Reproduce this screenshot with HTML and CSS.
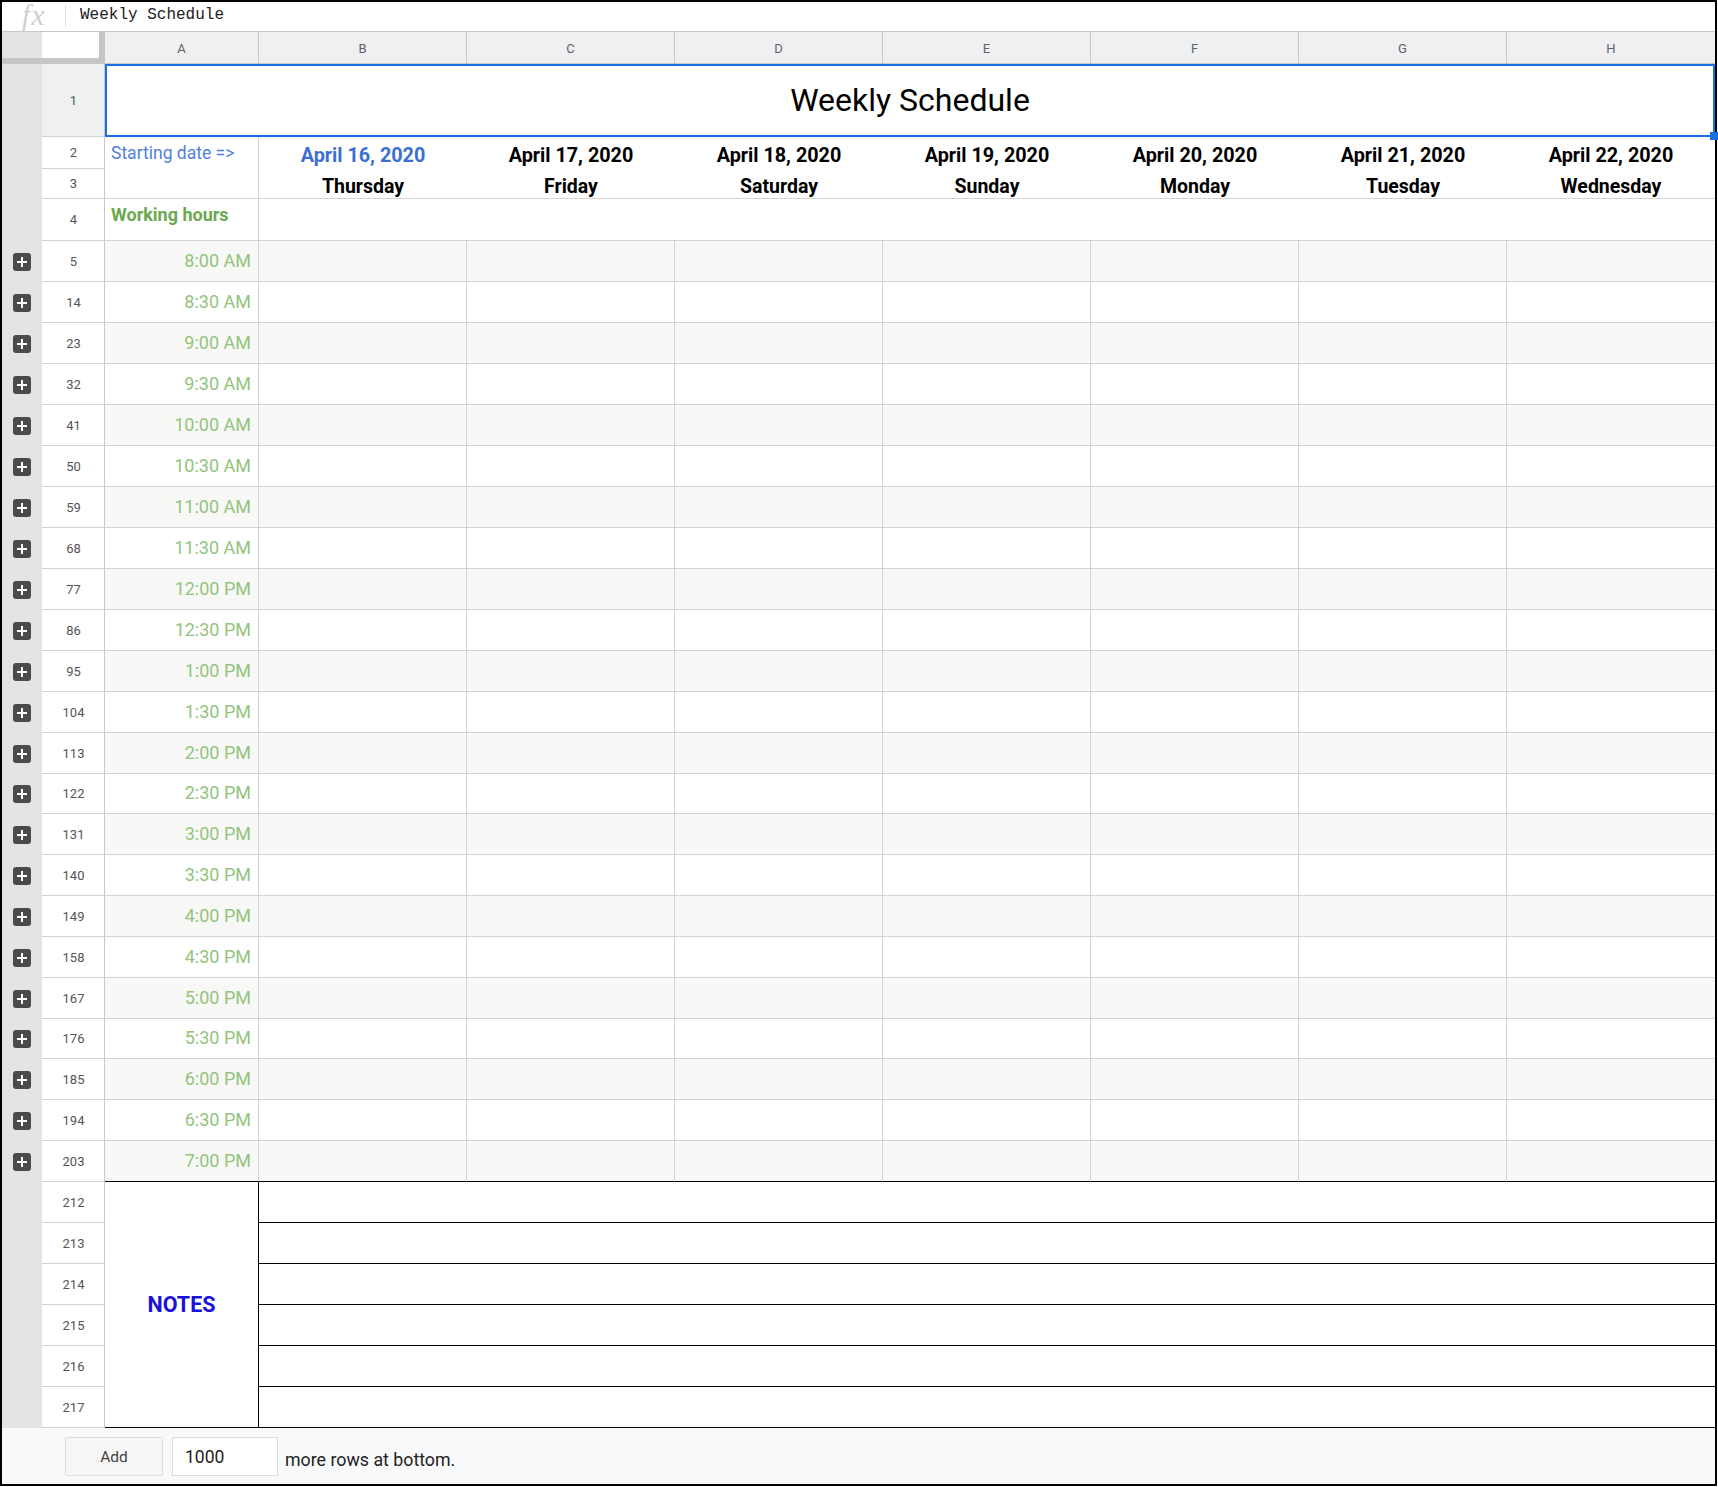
FILE: index.html
```html
<!DOCTYPE html>
<html>
<head>
<meta charset="utf-8">
<title>Weekly Schedule</title>
<link rel="stylesheet" href="styles.css">
</head>
<body>
<div class="frame">
  <div class="formula-bar">
    <div class="fx">fx</div>
    <div class="sep"></div>
    <div class="formula">Weekly Schedule</div>
  </div>
  <div class="sheet">
    <div class="r">
      <div class="g-head"></div>
      <div class="corner"><div class="corner-box"></div></div>
      <div class="colh">A</div><div class="colh">B</div><div class="colh">C</div><div class="colh">D</div>
      <div class="colh">E</div><div class="colh">F</div><div class="colh">G</div><div class="colh last">H</div>
    </div>
    <div class="r">
      <div class="gut rs4"></div>
      <div class="rh sel">1</div>
      <div class="title">Weekly Schedule<span class="handle"></span></div>
    </div>
    <div class="r">
      <div class="rh">2</div>
      <div class="start">Starting date =&gt;</div>
      <div class="date first">April 16, 2020</div>
      <div class="date">April 17, 2020</div>
      <div class="date">April 18, 2020</div>
      <div class="date">April 19, 2020</div>
      <div class="date">April 20, 2020</div>
      <div class="date">April 21, 2020</div>
      <div class="date">April 22, 2020</div>
    </div>
    <div class="r">
      <div class="rh">3</div>
      <div class="day">Thursday</div>
      <div class="day">Friday</div>
      <div class="day">Saturday</div>
      <div class="day">Sunday</div>
      <div class="day">Monday</div>
      <div class="day">Tuesday</div>
      <div class="day">Wednesday</div>
    </div>
    <div class="r">
      <div class="rh">4</div>
      <div class="hours">Working hours</div>
      <div class="blank7"></div>
    </div>

    <div class="r alt"><div class="gut"><span class="plus"></span></div><div class="rh">5</div><div class="c t">8:00 AM</div><div class="c"></div><div class="c"></div><div class="c"></div><div class="c"></div><div class="c"></div><div class="c"></div><div class="c"></div></div>
    <div class="r"><div class="gut"><span class="plus"></span></div><div class="rh">14</div><div class="c t">8:30 AM</div><div class="c"></div><div class="c"></div><div class="c"></div><div class="c"></div><div class="c"></div><div class="c"></div><div class="c"></div></div>
    <div class="r alt"><div class="gut"><span class="plus"></span></div><div class="rh">23</div><div class="c t">9:00 AM</div><div class="c"></div><div class="c"></div><div class="c"></div><div class="c"></div><div class="c"></div><div class="c"></div><div class="c"></div></div>
    <div class="r"><div class="gut"><span class="plus"></span></div><div class="rh">32</div><div class="c t">9:30 AM</div><div class="c"></div><div class="c"></div><div class="c"></div><div class="c"></div><div class="c"></div><div class="c"></div><div class="c"></div></div>
    <div class="r alt"><div class="gut"><span class="plus"></span></div><div class="rh">41</div><div class="c t">10:00 AM</div><div class="c"></div><div class="c"></div><div class="c"></div><div class="c"></div><div class="c"></div><div class="c"></div><div class="c"></div></div>
    <div class="r"><div class="gut"><span class="plus"></span></div><div class="rh">50</div><div class="c t">10:30 AM</div><div class="c"></div><div class="c"></div><div class="c"></div><div class="c"></div><div class="c"></div><div class="c"></div><div class="c"></div></div>
    <div class="r alt"><div class="gut"><span class="plus"></span></div><div class="rh">59</div><div class="c t">11:00 AM</div><div class="c"></div><div class="c"></div><div class="c"></div><div class="c"></div><div class="c"></div><div class="c"></div><div class="c"></div></div>
    <div class="r"><div class="gut"><span class="plus"></span></div><div class="rh">68</div><div class="c t">11:30 AM</div><div class="c"></div><div class="c"></div><div class="c"></div><div class="c"></div><div class="c"></div><div class="c"></div><div class="c"></div></div>
    <div class="r alt"><div class="gut"><span class="plus"></span></div><div class="rh">77</div><div class="c t">12:00 PM</div><div class="c"></div><div class="c"></div><div class="c"></div><div class="c"></div><div class="c"></div><div class="c"></div><div class="c"></div></div>
    <div class="r"><div class="gut"><span class="plus"></span></div><div class="rh">86</div><div class="c t">12:30 PM</div><div class="c"></div><div class="c"></div><div class="c"></div><div class="c"></div><div class="c"></div><div class="c"></div><div class="c"></div></div>
    <div class="r alt"><div class="gut"><span class="plus"></span></div><div class="rh">95</div><div class="c t">1:00 PM</div><div class="c"></div><div class="c"></div><div class="c"></div><div class="c"></div><div class="c"></div><div class="c"></div><div class="c"></div></div>
    <div class="r"><div class="gut"><span class="plus"></span></div><div class="rh">104</div><div class="c t">1:30 PM</div><div class="c"></div><div class="c"></div><div class="c"></div><div class="c"></div><div class="c"></div><div class="c"></div><div class="c"></div></div>
    <div class="r alt"><div class="gut"><span class="plus"></span></div><div class="rh">113</div><div class="c t">2:00 PM</div><div class="c"></div><div class="c"></div><div class="c"></div><div class="c"></div><div class="c"></div><div class="c"></div><div class="c"></div></div>
    <div class="r"><div class="gut"><span class="plus"></span></div><div class="rh">122</div><div class="c t">2:30 PM</div><div class="c"></div><div class="c"></div><div class="c"></div><div class="c"></div><div class="c"></div><div class="c"></div><div class="c"></div></div>
    <div class="r alt"><div class="gut"><span class="plus"></span></div><div class="rh">131</div><div class="c t">3:00 PM</div><div class="c"></div><div class="c"></div><div class="c"></div><div class="c"></div><div class="c"></div><div class="c"></div><div class="c"></div></div>
    <div class="r"><div class="gut"><span class="plus"></span></div><div class="rh">140</div><div class="c t">3:30 PM</div><div class="c"></div><div class="c"></div><div class="c"></div><div class="c"></div><div class="c"></div><div class="c"></div><div class="c"></div></div>
    <div class="r alt"><div class="gut"><span class="plus"></span></div><div class="rh">149</div><div class="c t">4:00 PM</div><div class="c"></div><div class="c"></div><div class="c"></div><div class="c"></div><div class="c"></div><div class="c"></div><div class="c"></div></div>
    <div class="r"><div class="gut"><span class="plus"></span></div><div class="rh">158</div><div class="c t">4:30 PM</div><div class="c"></div><div class="c"></div><div class="c"></div><div class="c"></div><div class="c"></div><div class="c"></div><div class="c"></div></div>
    <div class="r alt"><div class="gut"><span class="plus"></span></div><div class="rh">167</div><div class="c t">5:00 PM</div><div class="c"></div><div class="c"></div><div class="c"></div><div class="c"></div><div class="c"></div><div class="c"></div><div class="c"></div></div>
    <div class="r"><div class="gut"><span class="plus"></span></div><div class="rh">176</div><div class="c t">5:30 PM</div><div class="c"></div><div class="c"></div><div class="c"></div><div class="c"></div><div class="c"></div><div class="c"></div><div class="c"></div></div>
    <div class="r alt"><div class="gut"><span class="plus"></span></div><div class="rh">185</div><div class="c t">6:00 PM</div><div class="c"></div><div class="c"></div><div class="c"></div><div class="c"></div><div class="c"></div><div class="c"></div><div class="c"></div></div>
    <div class="r"><div class="gut"><span class="plus"></span></div><div class="rh">194</div><div class="c t">6:30 PM</div><div class="c"></div><div class="c"></div><div class="c"></div><div class="c"></div><div class="c"></div><div class="c"></div><div class="c"></div></div>
    <div class="r alt end"><div class="gut"><span class="plus"></span></div><div class="rh">203</div><div class="c t">7:00 PM</div><div class="c"></div><div class="c"></div><div class="c"></div><div class="c"></div><div class="c"></div><div class="c"></div><div class="c"></div></div>

    <div class="r">
      <div class="gut rs6"></div>
      <div class="rh">212</div>
      <div class="notes-a">NOTES</div>
      <div class="note-line"></div>
    </div>
    <div class="r"><div class="rh">213</div><div class="note-line"></div></div>
    <div class="r"><div class="rh">214</div><div class="note-line"></div></div>
    <div class="r"><div class="rh">215</div><div class="note-line"></div></div>
    <div class="r"><div class="rh">216</div><div class="note-line"></div></div>
    <div class="r"><div class="rh">217</div><div class="note-line"></div></div>
  </div>
  <div class="addbar">
    <div class="btn">Add</div>
    <div class="num">1000</div>
    <div class="more">more rows at bottom.</div>
  </div>
</div>
</body>
</html>
```

FILE: styles.css
```css
* { box-sizing: border-box; margin: 0; padding: 0; }
html, body { background: #fff; }
body { margin: 0; font-family: Roboto, "Liberation Sans", Arial, sans-serif; color: #000; }

.frame {
  width: 1717px;
  height: 1486px;
  border: 2px solid #000;
  display: flex;
  flex-direction: column;
  background: #fff;
}

/* formula bar */
.formula-bar {
  height: 30px;
  flex: none;
  border-bottom: 1px solid #c8c8c8;
  display: flex;
  align-items: flex-start;
}
.fx {
  width: 63px;
  padding-left: 20px;
  padding-top: 0;
  font-family: "Liberation Serif", "DejaVu Serif", serif;
  font-style: italic;
  font-size: 29px;
  line-height: 26px;
  letter-spacing: 1.5px;
  color: #cfcfcf;
}
.sep { width: 1px; height: 22px; margin-top: 3px; background: #dadce0; }
.formula {
  margin-left: 14px;
  padding-top: 4px;
  font-family: "Liberation Mono", "DejaVu Sans Mono", monospace;
  font-size: 16px;
  line-height: 18px;
  color: #222;
}

/* grid */
.sheet {
  display: grid;
  grid-template-columns: 40px 63px 154px repeat(7, 208px);
  grid-template-rows:
    32px 73px 32px 30px 42px
    41px 41px 41px 41px 41px 41px 41px 41px 41px 41px 41px 41px 41px 40px
    41px 41px 41px 41px 41px 40px 41px 41px 41px
    repeat(6, 41px);
  flex: none;
}
.r { display: contents; }

.g-head { background: #e4e4e4; border-bottom: 6px solid #c6c6c6; }
.corner { background: #c6c6c6; }
.corner-box { width: 57px; height: 26px; background: #fff; }
.colh {
  background: #eff0f1;
  border-right: 1px solid #c8c8c8;
  border-bottom: 1px solid #c8c8c8;
  display: flex;
  align-items: center;
  justify-content: center;
  font-size: 13px;
  color: #5f6368;
  padding-top: 1px;
}
.colh.last { border-right: 0; }

.gut {
  background: #e4e4e4;
  display: flex;
  align-items: center;
  justify-content: center;
}
.rs4 { grid-row: span 4; }
.rs6 { grid-row: span 6; }
.plus {
  position: relative;
  width: 18px;
  height: 18px;
  border-radius: 3px;
  background: #4a4a4a;
}
.plus::before, .plus::after {
  content: "";
  position: absolute;
  background: #fff;
  left: 50%;
  top: 50%;
}
.plus::before { width: 10px; height: 2px; margin: -1px 0 0 -5px; }
.plus::after { width: 2px; height: 10px; margin: -5px 0 0 -1px; }

.rh {
  background: #fff;
  border-right: 1px solid #c8c8c8;
  border-bottom: 1px solid #d3d3d3;
  display: flex;
  align-items: center;
  justify-content: center;
  font-size: 13px;
  color: #555;
  padding-left: 1px;
}
.rh.sel { background: #eef0f1; }

.title {
  grid-column: span 8;
  position: relative;
  border: 2px solid #1a6fe0;
  text-align: center;
  font-size: 32px;
  line-height: 37px;
  padding-top: 16px;
  color: #000;
}
.handle {
  position: absolute;
  right: -5px;
  bottom: -5px;
  width: 8px;
  height: 8px;
  background: #1a6fe0;
}

.start {
  grid-row: span 2;
  border-right: 1px solid #d3d3d3;
  border-bottom: 1px solid #d3d3d3;
  padding: 6px 0 0 6px;
  font-size: 17.5px;
  line-height: 20px;
  color: #4f80dc;
}
.date {
  text-align: center;
  font-weight: 700;
  font-size: 19.8px;
  line-height: 23px;
  padding-top: 7px;
  color: #000;
}
.date.first { color: #3c6fd4; }
.day {
  text-align: center;
  font-weight: 700;
  font-size: 19.5px;
  line-height: 23px;
  padding-top: 6px;
  border-bottom: 1px solid #d3d3d3;
}
.hours {
  border-right: 1px solid #d3d3d3;
  border-bottom: 1px solid #d3d3d3;
  padding: 5px 0 0 6px;
  font-weight: 700;
  font-size: 18px;
  line-height: 21px;
  color: #6aa84f;
}
.blank7 { grid-column: span 7; border-bottom: 1px solid #d3d3d3; }

.c {
  border-right: 1px solid #d3d3d3;
  border-bottom: 1px solid #d3d3d3;
  background: #fff;
}
.r > .c:last-child { border-right: 0; }
.alt > .c { background: #f8f8f6; }
.end > .c { border-bottom-color: #000; }
.t {
  display: flex;
  align-items: center;
  justify-content: flex-end;
  padding: 0 7px 2px 0;
  font-size: 18px;
  color: #93c47d;
}

.notes-a {
  grid-row: span 6;
  border-right: 1px solid #000;
  border-bottom: 1px solid #000;
  display: flex;
  align-items: center;
  justify-content: center;
  font-weight: 700;
  font-size: 21.5px;
  color: #1a12d8;
}
.note-line { grid-column: span 7; border-bottom: 1px solid #000; }

/* add rows bar */
.addbar {
  flex: 1;
  background: #f8f9fa;
  display: flex;
  align-items: flex-start;
  padding: 9px 0 0 63px;
}
.btn {
  width: 98px;
  height: 39px;
  border: 1px solid #dadce0;
  border-radius: 2px;
  background: #f6f6f6;
  display: flex;
  align-items: center;
  justify-content: center;
  font-size: 15.5px;
  color: #444;
}
.num {
  width: 106px;
  height: 39px;
  margin-left: 9px;
  border: 1px solid #dadce0;
  background: #fff;
  display: flex;
  align-items: center;
  padding-left: 12px;
  font-size: 17.5px;
  color: #222;
}
.more {
  margin: 13px 0 0 7px;
  font-size: 17.8px;
  line-height: 20px;
  color: #222;
}
```
